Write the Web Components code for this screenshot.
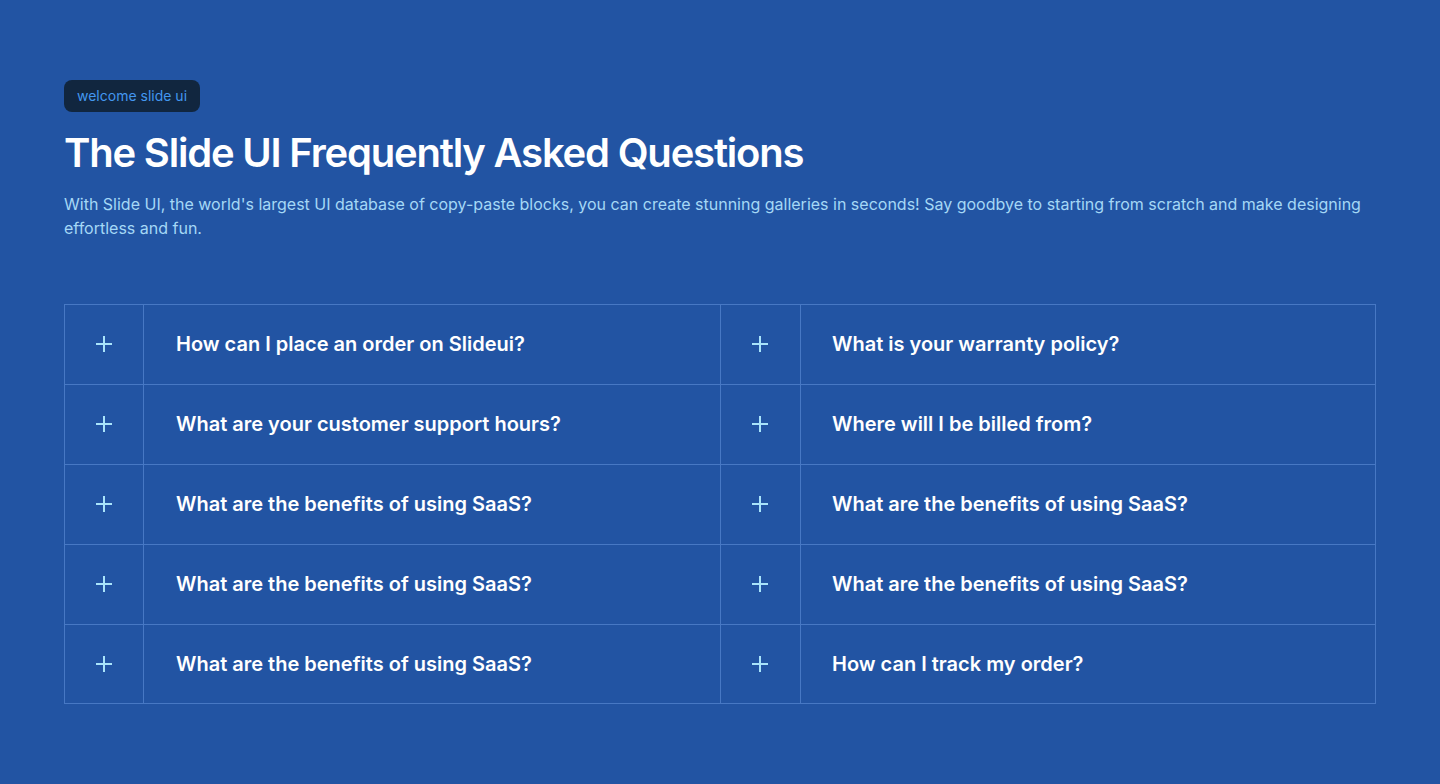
<!DOCTYPE html>
<html lang="en">
<head>
<meta charset="utf-8">
<meta name="viewport" content="width=device-width, initial-scale=1">
<title>Slide UI – Frequently Asked Questions</title>
<style>
  body {
    margin: 0;
    min-height: 100vh;
    background: #2254a3;
    color: #fff;
    font-family: Inter, "Liberation Sans", sans-serif;
    --line: #4778c4;
    --accent: #a5d8f6;
  }
</style>
</head>
<body>
<faq-section>
  <faq-badge slot="badge">welcome slide ui</faq-badge>
  <span slot="title">The Slide UI Frequently Asked Questions</span>
  <span slot="intro">With Slide UI, the world's largest UI database of copy-paste blocks, you can create stunning galleries in seconds! Say goodbye to starting from scratch and make designing effortless and fun.</span>
  <faq-list>
    <faq-item>How can I place an order on Slideui?</faq-item>
    <faq-item>What is your warranty policy?</faq-item>
    <faq-item>What are your customer support hours?</faq-item>
    <faq-item>Where will I be billed from?</faq-item>
    <faq-item>What are the benefits of using SaaS?</faq-item>
    <faq-item>What are the benefits of using SaaS?</faq-item>
    <faq-item>What are the benefits of using SaaS?</faq-item>
    <faq-item>What are the benefits of using SaaS?</faq-item>
    <faq-item>What are the benefits of using SaaS?</faq-item>
    <faq-item>How can I track my order?</faq-item>
  </faq-list>
</faq-section>
<script>
  const define = (name, html, setup) => {
    const template = document.createElement('template');
    template.innerHTML = html;
    customElements.define(name, class extends HTMLElement {
      constructor() {
        super();
        this.attachShadow({ mode: 'open' }).append(template.content.cloneNode(true));
        if (setup) setup(this.shadowRoot);
      }
    });
  };

  define('faq-section', `
    <style>
      :host { display: block; padding: 80px 64px; }
      header { display: flex; flex-direction: column; align-items: flex-start; margin-bottom: 64px; }
      h1 { margin: 16px 0 14px; font-size: 40px; line-height: 50px; font-weight: 600; letter-spacing: -0.03em; }
      p { margin: 0; font-size: 16px; line-height: 24px; font-weight: 400; color: var(--accent); }
    </style>
    <header>
      <slot name="badge"></slot>
      <h1><slot name="title"></slot></h1>
      <p><slot name="intro"></slot></p>
    </header>
    <slot></slot>`);

  define('faq-badge', `
    <style>
      :host {
        display: block; padding: 6px 13px; border-radius: 8px;
        background: #11263f; color: #4397f0;
        font-size: 14px; line-height: 20px;
      }
    </style>
    <slot></slot>`);

  define('faq-list', `
    <style>
      :host {
        display: grid; grid-template-columns: repeat(2, 1fr);
        box-shadow: inset -1px -1px var(--line);
      }
      ::slotted(:nth-child(odd)) { --icon-edge: inset -1px 0 var(--line); }
      ::slotted(:nth-child(even)) { --text-edge: inset 1px 0 var(--line); }
    </style>
    <slot></slot>`);

  define('faq-item', `
    <style>
      :host { display: block; box-shadow: inset 1px 1px var(--line); }
      h2 { margin: 0; height: 100%; font: inherit; }
      button {
        display: flex; width: 100%; height: 100%; min-height: 80px; padding: 0;
        border: 0; background: none; color: inherit; cursor: pointer; text-align: left;
        font-family: inherit; font-size: 20px; line-height: 24px; font-weight: 600;
      }
      .icon {
        display: flex; flex: none; width: 80px; align-self: stretch;
        align-items: center; justify-content: center;
        color: #a9e4fb; box-shadow: var(--icon-edge, none);
      }
      .text {
        display: flex; flex: 1; align-self: stretch; align-items: center;
        padding: 0 32px; box-shadow: var(--text-edge, none);
      }
    </style>
    <h2><button type="button" aria-expanded="false">
      <span class="icon"><svg width="24" height="24" viewBox="0 0 24 24" fill="none" stroke="currentColor" stroke-width="2" aria-hidden="true"><path d="M12 4v16M4 12h16"/></svg></span>
      <span class="text"><span><slot></slot></span></span>
    </button></h2>`, root => {
      const button = root.querySelector('button');
      button.addEventListener('click', () => {
        button.setAttribute('aria-expanded', String(button.getAttribute('aria-expanded') !== 'true'));
      });
    });
</script>
</body>
</html>
